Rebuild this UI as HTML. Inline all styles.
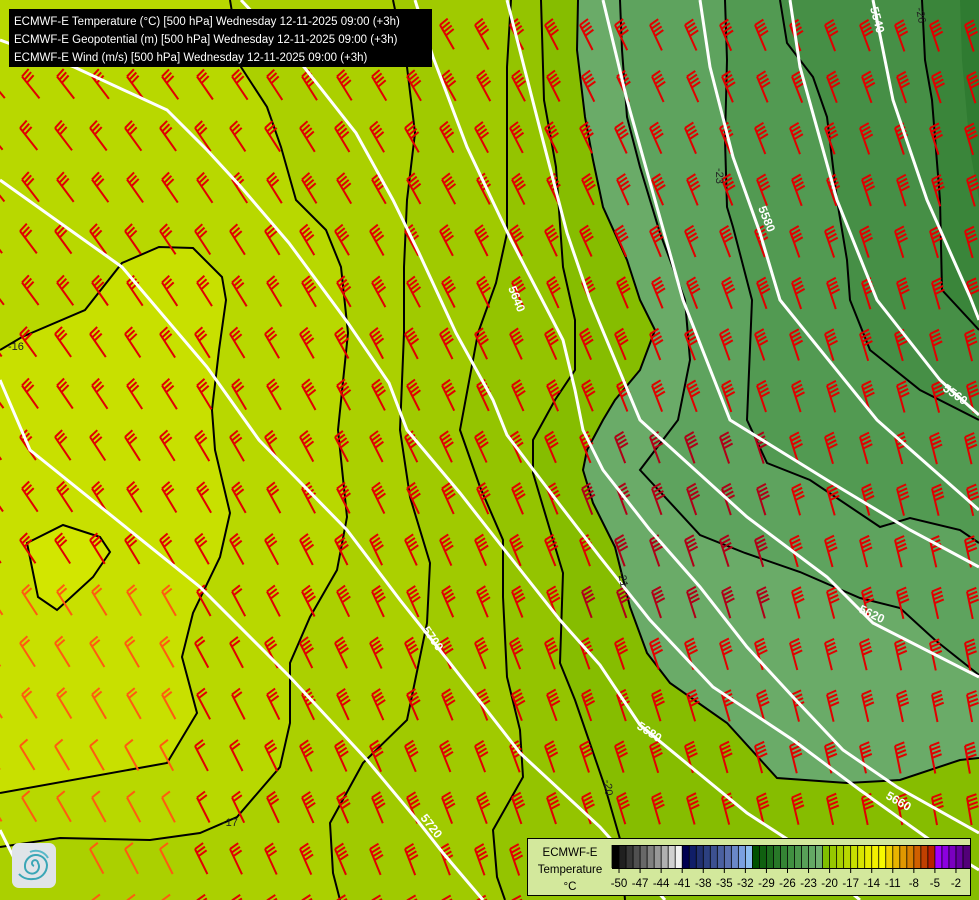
<!DOCTYPE html>
<html><head><meta charset="utf-8"><style>
html,body{margin:0;padding:0;width:979px;height:900px;overflow:hidden;background:#b8d800}
svg{display:block}
.t{font-family:"Liberation Sans",sans-serif}
</style></head><body>
<svg id="s" width="979" height="900" viewBox="0 0 979 900" xmlns="http://www.w3.org/2000/svg">
<rect width="979" height="900" fill="#b8d800"/>
<polygon fill="#c8e000" points="0,350 22,337 85,310 122,263 159,247 193,248 222,277 226,300 219,350 212,410 215,450 230,513 220,557 193,613 182,657 197,713 167,763 0,793"/>
<polygon fill="#d2e600" stroke="#000" stroke-width="2" points="27,543 63,525 100,537 110,552 93,577 57,610 38,597"/>
<polygon fill="#abd000" points="230,0 241,67 267,107 281,147 296,200 326,230 341,267 348,333 338,430 347,517 337,570 310,617 290,663 290,723 280,767 237,817 200,833 150,840 60,838 0,847 0,900 979,900 979,0"/>
<polygon fill="#a0ca00" points="393,0 407,67 415,133 407,200 404,267 404,333 400,430 410,497 430,563 427,623 407,720 363,763 330,823 333,873 340,900 979,900 979,0"/>
<polygon fill="#94c400" points="511,0 507,67 507,233 496,283 478,333 460,430 480,487 503,540 503,597 507,677 520,730 523,777 493,830 497,877 505,900 979,900 979,0"/>
<polygon fill="#86bd00" points="541,0 544,100 556,167 563,267 575,320 575,370 555,400 533,440 533,473 553,540 563,573 560,663 575,700 605,787 620,839 625,900 979,900 979,0"/>
<polygon fill="#6aab68" points="578,0 577,50 585,117 593,160 603,207 627,260 640,300 655,330 640,370 615,400 603,420 587,450 583,470 593,503 615,547 630,607 647,653 670,683 727,723 777,778 847,783 900,780 960,760 979,758 979,0"/>
<polygon fill="#5ea35e" points="620,0 622,50 627,117 640,167 660,233 685,300 690,360 678,420 640,470 700,535 745,553 800,572 860,598 900,608 935,640 979,675 979,0"/>
<polygon fill="#529a52" points="725,0 727,60 725,140 727,207 733,227 752,300 747,420 767,463 810,480 880,527 910,518 960,530 979,543 979,0"/>
<polygon fill="#468f46" points="780,0 787,43 813,77 827,117 837,200 847,260 850,300 870,350 920,390 979,420 979,0"/>
<polygon fill="#3a853a" points="922,0 925,60 932,100 940,200 942,290 979,330 979,0"/>
<polygon fill="#2f7b31" points="960,0 962,60 970,150 979,200 979,0"/>
<g fill="none" stroke="#000" stroke-width="2">
<polyline points="0,350 22,337 85,310 122,263 159,247 193,248 222,277 226,300 219,350 212,410 215,450 230,513 220,557 193,613 182,657 197,713 167,763 0,793"/>
<polyline points="230,0 241,67 267,107 281,147 296,200 326,230 341,267 348,333 338,430 347,517 337,570 310,617 290,663 290,723 280,767 237,817 200,833 150,840 60,838 0,847"/>
<polyline points="393,0 407,67 415,133 407,200 404,267 404,333 400,430 410,497 430,563 427,623 407,720 363,763 330,823 333,873 340,900"/>
<polyline points="511,0 507,67 507,233 496,283 478,333 460,430 480,487 503,540 503,597 507,677 520,730 523,777 493,830 497,877 505,900"/>
<polyline points="541,0 544,100 556,167 563,267 575,320 575,370 555,400 533,440 533,473 553,540 563,573 560,663 575,700 605,787 620,839 625,900"/>
<polyline points="578,0 577,50 585,117 593,160 603,207 627,260 640,300 655,330 640,370 615,400 603,420 587,450 583,470 593,503 615,547 630,607 647,653 670,683 727,723 777,778 847,783 900,780 960,760 979,758"/>
<polyline points="620,0 622,50 627,117 640,167 660,233 685,300 690,360 678,420 640,470 700,535 745,553 800,572 860,598 900,608 935,640 979,675"/>
<polyline points="725,0 727,60 725,140 727,207 733,227 752,300 747,420 767,463 810,480 880,527 910,518 960,530 979,543"/>
<polyline points="780,0 787,43 813,77 827,117 837,200 847,260 850,300 870,350 920,390 979,420"/>
<polyline points="922,0 925,60 932,100 940,200 942,290 979,330"/>
</g>
<g id="barbs" fill="none" stroke-width="2"></g>
<g fill="none" stroke="#fff" stroke-width="3">
<polyline points="0,380 30,450 200,587 290,677 367,760 417,820 443,853 483,900"/>
<polyline points="0,180 122,267 207,367 259,440 347,530 400,600 450,663 520,753 600,827 665,900"/>
<polyline points="0,40 74,67 167,110 207,150 241,187 289,243 348,323 389,383 407,430 460,493 507,553 560,620 600,665 640,725 747,813 787,839 860,900"/>
<polyline points="241,0 304,67 356,133 393,200 419,253 456,333 493,400 507,435 560,505 600,557 650,620 713,687 793,740 860,790 930,840 979,870"/>
<polyline points="415,0 433,57 467,147 511,240 563,340 575,390 583,430 603,470 650,530 700,587 747,647 793,697 843,750 897,787 979,833"/>
<polyline points="507,0 541,133 567,233 590,300 640,420 747,517 827,577 873,623 979,677"/>
<polyline points="603,0 627,100 653,193 683,300 730,420 827,480 910,530 979,567"/>
<polyline points="700,0 710,67 733,157 760,233 780,300 877,420 979,510"/>
<polyline points="790,0 800,67 837,200 877,300 940,380 979,415"/>
<polyline points="873,0 893,100 927,200 970,297 979,320"/>
<polyline points="0,830 25,880"/>
</g>
<g class="t" fill="#fff" font-size="12" font-weight="bold">
<text transform="translate(420,818) rotate(52)">5720</text>
<text transform="translate(422,630) rotate(55)">5700</text>
<text transform="translate(636,728) rotate(33)">5680</text>
<text transform="translate(858,612) rotate(25)">5620</text>
<text transform="translate(885,798) rotate(30)">5660</text>
<text transform="translate(758,208) rotate(68)">5580</text>
<text transform="translate(942,390) rotate(35)">5560</text>
<text transform="translate(870,8) rotate(75)">5540</text>
<text transform="translate(508,288) rotate(68)">5640</text>
</g>
<g class="t" fill="#222" font-size="11">
<text x="222" y="826">-17</text><text x="8" y="350">-16</text>
<text transform="translate(716,168) rotate(90)">-23</text>
<text transform="translate(618,572) rotate(80)">-21</text>
<text transform="translate(604,780) rotate(85)">-20</text>
<text transform="translate(916,8) rotate(80)">-26</text>
</g>
<rect x="9" y="9" width="423" height="58" fill="#000"/>
<g class="t" fill="#fff" font-size="11.5">
<text x="14" y="25">ECMWF-E Temperature (°C) [500 hPa] Wednesday 12-11-2025 09:00 (+3h)</text>
<text x="14" y="43">ECMWF-E Geopotential (m) [500 hPa] Wednesday 12-11-2025 09:00 (+3h)</text>
<text x="14" y="61">ECMWF-E Wind (m/s) [500 hPa] Wednesday 12-11-2025 09:00 (+3h)</text>
</g>
<rect x="12" y="843" width="44" height="45" rx="7" fill="#e0e4e8"/>
<g fill="none" stroke="#3aa6b6" stroke-width="2">
<path d="M34,866 a3,3 0 1 1 4,-3 a7,7 0 1 1 -13,4 a11,11 0 1 1 22,-2 a14,14 0 0 1 -14,14 a16,16 0 0 1 -14,-5"/>
<path d="M30,852 a14,14 0 0 1 18,6" stroke="#58b8c8"/>
</g>
<rect x="527.5" y="838.5" width="443" height="57" fill="#d3e89c" stroke="#000"/>
<g class="t" fill="#000" font-size="11.5" text-anchor="middle">
<text x="570" y="856">ECMWF-E</text>
<text x="570" y="873">Temperature</text>
<text x="570" y="890">°C</text>
</g>
<g id="cbar"></g>
<rect x="612.5" y="845.5" width="358" height="23" fill="none" stroke="#000"/>
<g id="ticks" class="t" fill="#000" font-size="11.5" text-anchor="middle"></g>
</svg>
<script>
(function(){
var NS="http://www.w3.org/2000/svg";
var cols=["#000000","#202020","#383838","#505050","#686868","#808080","#989898","#b0b0b0","#d0d0d0","#f0f0f0",
"#000050","#101e68","#203070","#2c4080","#3c5090","#4a60a0","#5a70b0","#6a88c8","#7aa0e0","#8cbcf0",
"#005000","#106010","#1c6c1c","#287828","#348434","#409040","#4c984c","#58a058","#64a864","#70b070",
"#80c000","#96c800","#a8d000","#b8d800","#c8e000","#d8e400","#e8ec00","#f4f000","#f8f800","#f0d000","#e8b400","#e09800","#d88000","#d06000","#c04000","#b82000",
"#a000ff","#8c00e0","#7a00c0","#6600a0","#520078"];
var cb=document.getElementById("cbar"),w=358/51;
for(var i=0;i<51;i++){var r=document.createElementNS(NS,"rect");r.setAttribute("x",612+i*w);r.setAttribute("y",845);r.setAttribute("width",w+0.4);r.setAttribute("height",23);r.setAttribute("fill",cols[i]);cb.appendChild(r);
 var l=document.createElementNS(NS,"line");var xx=612+i*w;l.setAttribute("x1",xx);l.setAttribute("x2",xx);l.setAttribute("y1",845);l.setAttribute("y2",868);l.setAttribute("stroke","#000");l.setAttribute("stroke-width","0.8");cb.appendChild(l);}
var tk=document.getElementById("ticks");
for(var v=-50;v<=-2;v+=3){var x=612+(v+51)*w;var t=document.createElementNS(NS,"text");t.setAttribute("x",x);t.setAttribute("y",887);t.textContent=String(v);tk.appendChild(t);
 var l2=document.createElementNS(NS,"line");l2.setAttribute("x1",x);l2.setAttribute("x2",x);l2.setAttribute("y1",868);l2.setAttribute("y2",873);l2.setAttribute("stroke","#000");tk.appendChild(l2);}
var g=document.getElementById("barbs");
for(var j=0;j<18;j++){for(var i2=-1;i2<28;i2++){
 var x=20+35*i2+((j%2)?2:0),y=25+51.5*j;
 if(x<440&&y<72)continue;
 if(x>515&&y>828)continue;
 if(x<62&&y>834)continue;
 var th=(50+22*(x/979)+10*(y/900))*Math.PI/180;
 var L=28,cx=Math.cos(th),sy=Math.sin(th);
 var col="#e00000",n=(x<300?3:4);
 if(x<170&&y>560){col="#ff5a10";n=(y>700?1:2);}
 else if(x<260&&y>560&&y<800&&x>=170){n=2;}
 if(x>580&&x<760&&y>420&&y<640)col="#b00018";
 var d="M"+x+","+y+"L"+(x+L*cx).toFixed(1)+","+(y+L*sy).toFixed(1);
 var ba=th-100*Math.PI/180;
 for(var k=0;k<n;k++){var px=x+k*4*cx,py=y+k*4*sy;d+="M"+px.toFixed(1)+","+py.toFixed(1)+"l"+(10*Math.cos(ba)).toFixed(1)+","+(10*Math.sin(ba)).toFixed(1);}
 var p=document.createElementNS(NS,"path");p.setAttribute("d",d);p.setAttribute("stroke",col);g.appendChild(p);
}}
})();
</script>
</body></html>
